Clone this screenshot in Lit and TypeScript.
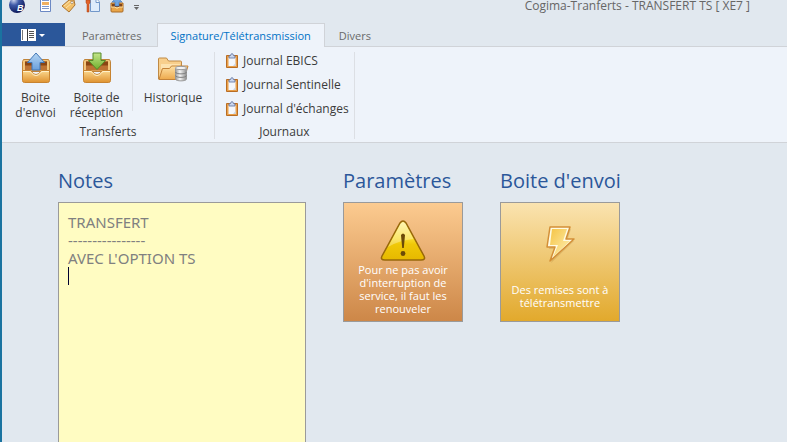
import { LitElement, html, css, svg } from "lit";
import { customElement, state } from "lit/decorators.js";

const tray = svg`
  <path d="M3.500 7.500h25l1 2v10h-27v-10z" fill="#f3c57c" stroke="#c08338"/>
  <path d="M5 9.500h22v9H5z" fill="#bd7233"/>
  <path d="M5 9.500h22v4H5z" fill="#8a4513"/>
  <path d="M2.500 18.500h8c1 0 2 4 5.500 4s4.500-4 5.500-4h8v10a2 2 0 0 1-2 2h-23a2 2 0 0 1-2-2z" fill="url(#trayFront)" stroke="#c8832f"/>
  <path d="M3 19.500h7c1 0 2.500 4 6 4s5-4 6-4h7" fill="none" stroke="#fff0c8"/>`;

const trayDefs = svg`<defs>
  <linearGradient id="trayFront" x1="0" y1="0" x2="0" y2="1"><stop offset="0" stop-color="#fbd88f"/><stop offset="1" stop-color="#df922f"/></linearGradient>
  <linearGradient id="blueArrow" x1="0" y1="0" x2="0" y2="1"><stop offset="0" stop-color="#b4d5f4"/><stop offset="1" stop-color="#6a9fdb"/></linearGradient>
  <linearGradient id="greenArrow" x1="0" y1="0" x2="0" y2="1"><stop offset="0" stop-color="#c4e68a"/><stop offset="1" stop-color="#6fae2c"/></linearGradient>
</defs>`;

const outboxIcon = html`<svg width="32" height="34" viewBox="0 0 32 34" aria-hidden="true">${trayDefs}${tray}
  <path d="M16 1l8.500 9.500H20V18h-8v-7.500H7.500z" fill="url(#blueArrow)" stroke="#4377b5" stroke-linejoin="round"/></svg>`;

const inboxIcon = html`<svg width="32" height="34" viewBox="0 0 32 34" aria-hidden="true">${trayDefs}${tray}
  <path d="M16 17.500l8.500-9H20V1h-8v7.500H7.500z" fill="url(#greenArrow)" stroke="#56892a" stroke-linejoin="round"/></svg>`;

const historyIcon = html`<svg width="32" height="34" viewBox="0 0 32 34" aria-hidden="true">
  <defs>
    <linearGradient id="folder" x1="0" y1="0" x2="0" y2="1"><stop offset="0" stop-color="#ffe2a6"/><stop offset="1" stop-color="#eda94c"/></linearGradient>
    <linearGradient id="drum"><stop offset="0" stop-color="#9a9a9a"/><stop offset=".4" stop-color="#f6f6f6"/><stop offset="1" stop-color="#8c8c8c"/></linearGradient>
  </defs>
  <path d="M1.500 27V7q0-1 1-1h7l2 3h12q1 0 1 1v17z" fill="#f8cf8c" stroke="#c08a45"/>
  <path d="M4 12h19v5H4z" fill="#fde3b0"/>
  <path d="M2 27.500l3.500-11h7l2-2.500H31L27 27.500z" fill="url(#folder)" stroke="#c48339" stroke-linejoin="round"/>
  <path d="M18.500 16v11c0 2.500 11 2.500 11 0V16z" fill="url(#drum)" stroke="#9a9a9a"/>
  <ellipse cx="24" cy="16" rx="5.500" ry="1.700" fill="#f4f4f4" stroke="#9a9a9a"/>
  <path d="M18.500 20c0 2.500 11 2.500 11 0M18.500 23.500c0 2.500 11 2.500 11 0" fill="none" stroke="#808080"/></svg>`;

const clipboardIcon = html`<svg width="12" height="16" viewBox="0 0 12 16" aria-hidden="true">
  <path d="M.5 2.500h11v12H.5z" fill="#e9a04a" stroke="#b96d24"/>
  <path d="M2.500 4h7v9h-7z" fill="#f4f7fc"/>
  <path d="M7 13h2.500v-3z" fill="#c9d3e4"/>
  <path d="M3 5V3l2-1c0-2 2-2 2 0l2 1v2z" fill="#c9d6ee" stroke="#5d6f9c" stroke-width=".8"/></svg>`;

const warningIcon = html`<svg width="46" height="42" viewBox="0 0 46 42" aria-hidden="true">
  <defs><linearGradient id="warn" x1="0" y1="0" x2="0" y2="1"><stop offset="0" stop-color="#fff29a"/><stop offset=".45" stop-color="#f9dc2c"/><stop offset=".6" stop-color="#f0c808"/><stop offset="1" stop-color="#e6b800"/></linearGradient></defs>
  <path d="M20 3q3-4 6 0l18 33q2 4-3 4H5q-5 0-3-4z" fill="url(#warn)" stroke="#98680a" stroke-width="1.500"/>
  <path d="M20.500 4q2.500-3 5 0l8 15Q20 20 8 27z" fill="#fff" opacity=".3"/>
  <path d="M21 15q2-3 4 0l-1.200 13h-1.600z" fill="#6b4a08"/>
  <circle cx="23" cy="33.500" r="2.400" fill="#6b4a08"/></svg>`;

const boltIcon = html`<svg width="32" height="42" viewBox="0 0 32 42" aria-hidden="true">
  <defs><linearGradient id="bolt" x1="0" y1="0" x2="1" y2="1"><stop offset="0" stop-color="#f5c445"/><stop offset="1" stop-color="#fff2b8"/></linearGradient></defs>
  <path d="M8 6h19l-4 12h7L7 40l5-14H5z" fill="#a9782a" opacity=".25"/>
  <path d="M6 4h20l-4 12h8L6 38l5-14H3z" fill="#fffbe2" stroke="#d38f37" stroke-width="1.500" stroke-linejoin="round"/>
  <path d="M8 6h15l-4 12h7L9 34l5-12H6z" fill="url(#bolt)"/></svg>`;

const logo = html`<svg width="16" height="13" viewBox="0 0 16 13" aria-hidden="true">
  <defs><radialGradient id="orb" cx=".3" cy=".2" r=".8"><stop offset="0" stop-color="#cdd6ee"/><stop offset=".4" stop-color="#3f5aa8"/><stop offset="1" stop-color="#101b5c"/></radialGradient></defs>
  <circle cx="8" cy="5" r="8" fill="url(#orb)"/>
  <text x="8" y="11" font-size="9" font-weight="700" font-style="italic" font-family="Liberation Sans" fill="#fff">B</text></svg>`;

const listIcon = html`<svg width="13" height="13" viewBox="0 0 13 13" aria-hidden="true">
  <path d="M1.500-2h10v13.500h-10z" fill="#fff" stroke="#6c89c4"/>
  <path d="M3 .5h7M3 6.500h7M3 8.500h7" stroke="#7f98ca"/><path d="M3 2h7v3H3z" fill="#f0b060"/></svg>`;

const tagIcon = html`<svg width="15" height="13" viewBox="0 0 15 13" aria-hidden="true">
  <path d="M1 6l7-6h5l1 5-6 7z" fill="#f3c069" stroke="#ad7632" stroke-linejoin="round"/>
  <path d="M3 6l6-5M5 8l6-5" stroke="#fde2a4"/><circle cx="11" cy="2.500" r="1.200" fill="#fff" stroke="#8d6b4b" stroke-width=".6"/></svg>`;

const pageIcon = html`<svg width="16" height="13" viewBox="0 0 16 13" aria-hidden="true">
  <path d="M5.500-1h6l3 3v9.500h-9z" fill="#dfecfb" stroke="#7297c9"/><path d="M11-1v3.500h3.500" fill="#fff" stroke="#7297c9"/>
  <path d="M1 0h4v3l-1 1v8H2V4L1 3z" fill="#e2622a" stroke="#a64013" stroke-width=".5"/></svg>`;

const sendIcon = html`<svg width="14" height="13" viewBox="0 0 14 13" aria-hidden="true">
  <path d="M1 3h12v8q0 1-1 1H2q-1 0-1-1z" fill="#e9a548" stroke="#a96a26"/>
  <path d="M2 4h10v3H2z" fill="#7e431a"/><path d="M1 7h4l1 1h2l1-1h4" fill="none" stroke="#fde0a0"/>
  <path d="M7-3l5 5H9v4H5V2H2z" fill="#70a5df" stroke="#4377b5" stroke-width=".6"/></svg>`;

const moreIcon = html`<svg width="7" height="8" viewBox="0 0 7 8" aria-hidden="true">
  <path d="M1 2.500h5" stroke="#666"/><path d="M1 4h5L3.500 7z" fill="#666"/></svg>`;

const menuIcon = html`<svg width="25" height="14" viewBox="0 0 25 14" aria-hidden="true">
  <path d="M0 1h15v12H0z" fill="#fff"/><path d="M6.500 1v12" stroke="#3a3a3a"/>
  <path d="M1.500 2v10" stroke="#777"/>
  <path d="M8 3.500h5M8 5.500h5M8 7.500h5M8 9.500h5" stroke="#555"/>
  <path d="M18 6h6l-3 3z" fill="#fff"/></svg>`;

@customElement("app-root")
export class AppRoot extends LitElement {
  @state() private tab = "Signature/Télétransmission";

  private tabs = ["Paramètres", "Signature/Télétransmission", "Divers"];
  private shortcuts = [
    { label: "Liste", icon: listIcon },
    { label: "Étiquette", icon: tagIcon },
    { label: "Document", icon: pageIcon },
    { label: "Envoi", icon: sendIcon },
    { label: "Plus", icon: moreIcon },
  ];
  private journals = ["Journal EBICS", "Journal Sentinelle", "Journal d'échanges"];

  static styles = css`
    :host {
      display: flex;
      flex-direction: column;
      box-sizing: border-box;
      height: 100vh;
      overflow: hidden;
      border-left: 2px solid #1a73a0;
      background: #e1e8ef;
      color: #3b3b3b;
      font: 12px/15px "Open Sans", "Noto Sans", sans-serif;
    }
    * { box-sizing: border-box; }
    svg { display: block; flex: none; }
    button {
      font: inherit;
      color: inherit;
      background: none;
      border: 0;
      padding: 0;
      margin: 0;
      cursor: pointer;
    }
    .titlebar {
      display: flex;
      align-items: flex-start;
      height: 23px;
      flex: none;
      padding: 0 37px 0 7px;
    }
    .quick { display: flex; gap: 9px; margin-left: 14px; }
    .title {
      margin: 0 0 0 auto;
      font-size: 12px;
      line-height: 12px;
      font-weight: 400;
      color: #666;
    }
    .tabs {
      display: flex;
      flex: none;
      height: 24px;
      border-bottom: 1px solid #d0d3d8;
    }
    .file {
      width: 63px;
      display: flex;
      align-items: center;
      justify-content: center;
      background: #2b579a;
    }
    .tab {
      height: 24px;
      padding: 0 13px;
      border: 1px solid transparent;
      border-bottom: 0;
      color: #6a6a6a;
      font-size: 11px;
    }
    .file + .tab { padding: 0 14px 0 16px; }
    .tab.active { background: #eef3fa; border-color: #d0d3d8; color: #0072c6; }
    .ribbon {
      display: flex;
      flex: none;
      height: 96px;
      padding: 5px 0 3px;
      background: #eef3fa;
      border-bottom: 1px solid #d0d3d8;
    }
    .group {
      display: flex;
      flex-direction: column;
      justify-content: space-between;
      border-right: 1px solid #dcdfe4;
    }
    .name { text-align: center; }
    .tools { display: flex; padding: 0 3px; }
    .tool {
      display: flex;
      flex-direction: column;
      align-items: center;
      width: 61px;
      gap: 4px;
    }
    .tool.wide { width: 76px; }
    .sep { width: 1px; height: 52px; margin: 7px 2px 0 5px; background: #dcdfe4; }
    .journals { display: flex; flex-direction: column; padding: 0 5px 0 11px; }
    .journal { display: flex; align-items: center; gap: 5px; height: 24px; padding-bottom: 7px; }
    .main {
      display: flex;
      flex: 1;
      align-items: stretch;
      gap: 37px;
      min-height: 0;
      padding: 24px 56px 0;
    }
    .section { display: flex; flex-direction: column; width: 120px; flex: none; }
    .section.notes { width: 248px; }
    .heading {
      margin: 0 0 7px;
      font-size: 20px;
      line-height: 28px;
      font-weight: 400;
      color: #2b579a;
      white-space: nowrap;
    }
    .pad { position: relative; display: flex; flex: 1; }
    .note {
      flex: 1;
      margin: 0;
      padding: 10px 9px;
      border: 1px solid #9a9a9a;
      border-bottom: 0;
      border-radius: 0;
      outline: 0;
      resize: none;
      overflow: hidden;
      background: #fffcc2;
      color: #808080;
      font: 15px/18px "Noto Sans", "Open Sans", sans-serif;
    }
    .caret { position: absolute; left: 10px; top: 65px; width: 1px; height: 18px; background: #000030; }
    .tile {
      display: flex;
      flex-direction: column;
      align-items: center;
      justify-content: space-between;
      height: 120px;
      padding: 17px 4px 6px;
      border: 1px solid #9a9a9a;
      color: #fff;
      font-size: 11px;
      line-height: 13px;
    }
    .tile.alert { background: linear-gradient(#fccb90, #cd8748); }
    .tile.send { background: linear-gradient(#fae3b0, #e2a92c); padding: 20px 4px 12px; }
  `;

  render() {
    return html`
      <header class="titlebar">
        ${logo}
        <div class="quick">
          ${this.shortcuts.map((s) => html`<button aria-label=${s.label}>${s.icon}</button>`)}
        </div>
        <h1 class="title">Cogima-Tranferts - TRANSFERT TS [ XE7 ]</h1>
      </header>
      <nav class="tabs">
        <button class="file" aria-label="Menu">${menuIcon}</button>
        ${this.tabs.map(
          (t) => html`<button class="tab ${t === this.tab ? "active" : ""}" @click=${() => (this.tab = t)}>${t}</button>`
        )}
      </nav>
      <div class="ribbon">
        <section class="group">
          <div class="tools">
            <button class="tool">${outboxIcon}<span>Boite<br />d'envoi</span></button>
            <button class="tool">${inboxIcon}<span>Boite de<br />réception</span></button>
            <div class="sep"></div>
            <button class="tool wide">${historyIcon}<span>Historique</span></button>
          </div>
          <div class="name">Transferts</div>
        </section>
        <section class="group">
          <div class="journals">
            ${this.journals.map((j) => html`<button class="journal">${clipboardIcon}<span>${j}</span></button>`)}
          </div>
          <div class="name">Journaux</div>
        </section>
      </div>
      <main class="main">
        <section class="section notes">
          <h2 class="heading" id="notes">Notes</h2>
          <div class="pad">
            <textarea class="note" aria-labelledby="notes" spellcheck="false" .value=${"TRANSFERT\n----------------\nAVEC L'OPTION TS\n"}></textarea>
            <span class="caret"></span>
          </div>
        </section>
        <section class="section">
          <h2 class="heading">Paramètres</h2>
          <button class="tile alert">
            ${warningIcon}
            <span>Pour ne pas avoir<br />d'interruption de<br />service, il faut les<br />renouveler</span>
          </button>
        </section>
        <section class="section">
          <h2 class="heading">Boite d'envoi</h2>
          <button class="tile send">
            ${boltIcon}
            <span>Des remises sont à<br />télétransmettre</span>
          </button>
        </section>
      </main>
    `;
  }
}
